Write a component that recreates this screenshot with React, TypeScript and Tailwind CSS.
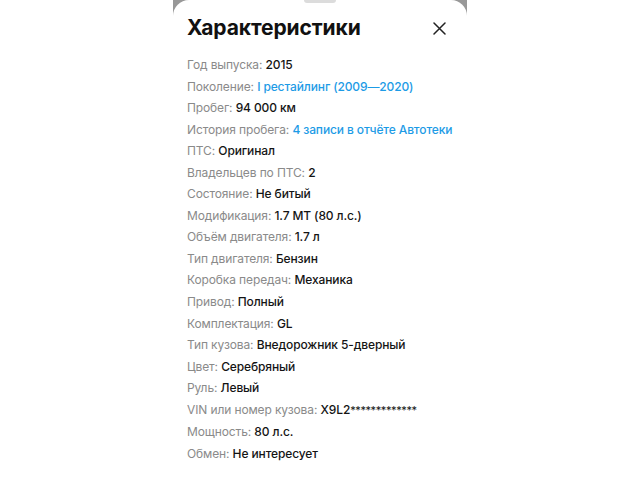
import React from 'react';

type Row = { label: string; value: string; link?: boolean; masked?: string };

const rows: Row[] = [
  { label: 'Год выпуска', value: '2015' },
  { label: 'Поколение', value: 'I рестайлинг (2009—2020)', link: true },
  { label: 'Пробег', value: '94 000 км' },
  { label: 'История пробега', value: '4 записи в отчёте Автотеки', link: true },
  { label: 'ПТС', value: 'Оригинал' },
  { label: 'Владельцев по ПТС', value: '2' },
  { label: 'Состояние', value: 'Не битый' },
  { label: 'Модификация', value: '1.7 MT (80 л.с.)' },
  { label: 'Объём двигателя', value: '1.7 л' },
  { label: 'Тип двигателя', value: 'Бензин' },
  { label: 'Коробка передач', value: 'Механика' },
  { label: 'Привод', value: 'Полный' },
  { label: 'Комплектация', value: 'GL' },
  { label: 'Тип кузова', value: 'Внедорожник 5-дверный' },
  { label: 'Цвет', value: 'Серебряный' },
  { label: 'Руль', value: 'Левый' },
  { label: 'VIN или номер кузова', value: 'X9L2', masked: '*************' },
  { label: 'Мощность', value: '80 л.с.' },
  { label: 'Обмен', value: 'Не интересует' },
];

export default function App() {
  return (
    <div className="w-[640px] h-[480px] overflow-hidden bg-white flex justify-center" style={{ fontFamily: 'Inter, "Noto Sans", sans-serif' }}>
      {/* backdrop strip behind the sheet */}
      <div className="w-[294px] h-full bg-[#989898]">
        <div className="h-full bg-white rounded-t-[16px] flex flex-col">
          <div className="w-8 h-[3px] bg-[#dcdcdc] rounded-b mx-auto" />

          {/* Header */}
          <div className="flex items-center justify-between pl-[14px] pr-[21px] mt-[11px]">
            <h2 className="text-[21px] leading-[28px] font-bold text-[#111] tracking-[-0.1px]">Характеристики</h2>
            <svg width="13" height="13" viewBox="0 0 13 13" className="text-[#222]">
              <path d="M1 1L12 12M12 1L1 12" stroke="currentColor" strokeWidth="1.5" strokeLinecap="round" />
            </svg>
          </div>

          {/* Spec list */}
          <div className="mt-[12px] px-[14px] flex flex-col">
            {rows.map((r, i) => (
              <div key={i} className="text-[12px] leading-[21.55px] whitespace-nowrap tracking-[-0.12px]">
                <span className="text-[#8a8a8a]">{r.label}: </span>
                <span className={r.link ? 'text-[#1d9be6] font-medium' : 'text-[#141414] font-medium'}>{r.value}</span>
                {r.masked && (
                  <span className="text-[#141414] text-[11px] tracking-[-0.4px]">{r.masked}</span>
                )}
              </div>
            ))}
          </div>
        </div>
      </div>
    </div>
  );
}
